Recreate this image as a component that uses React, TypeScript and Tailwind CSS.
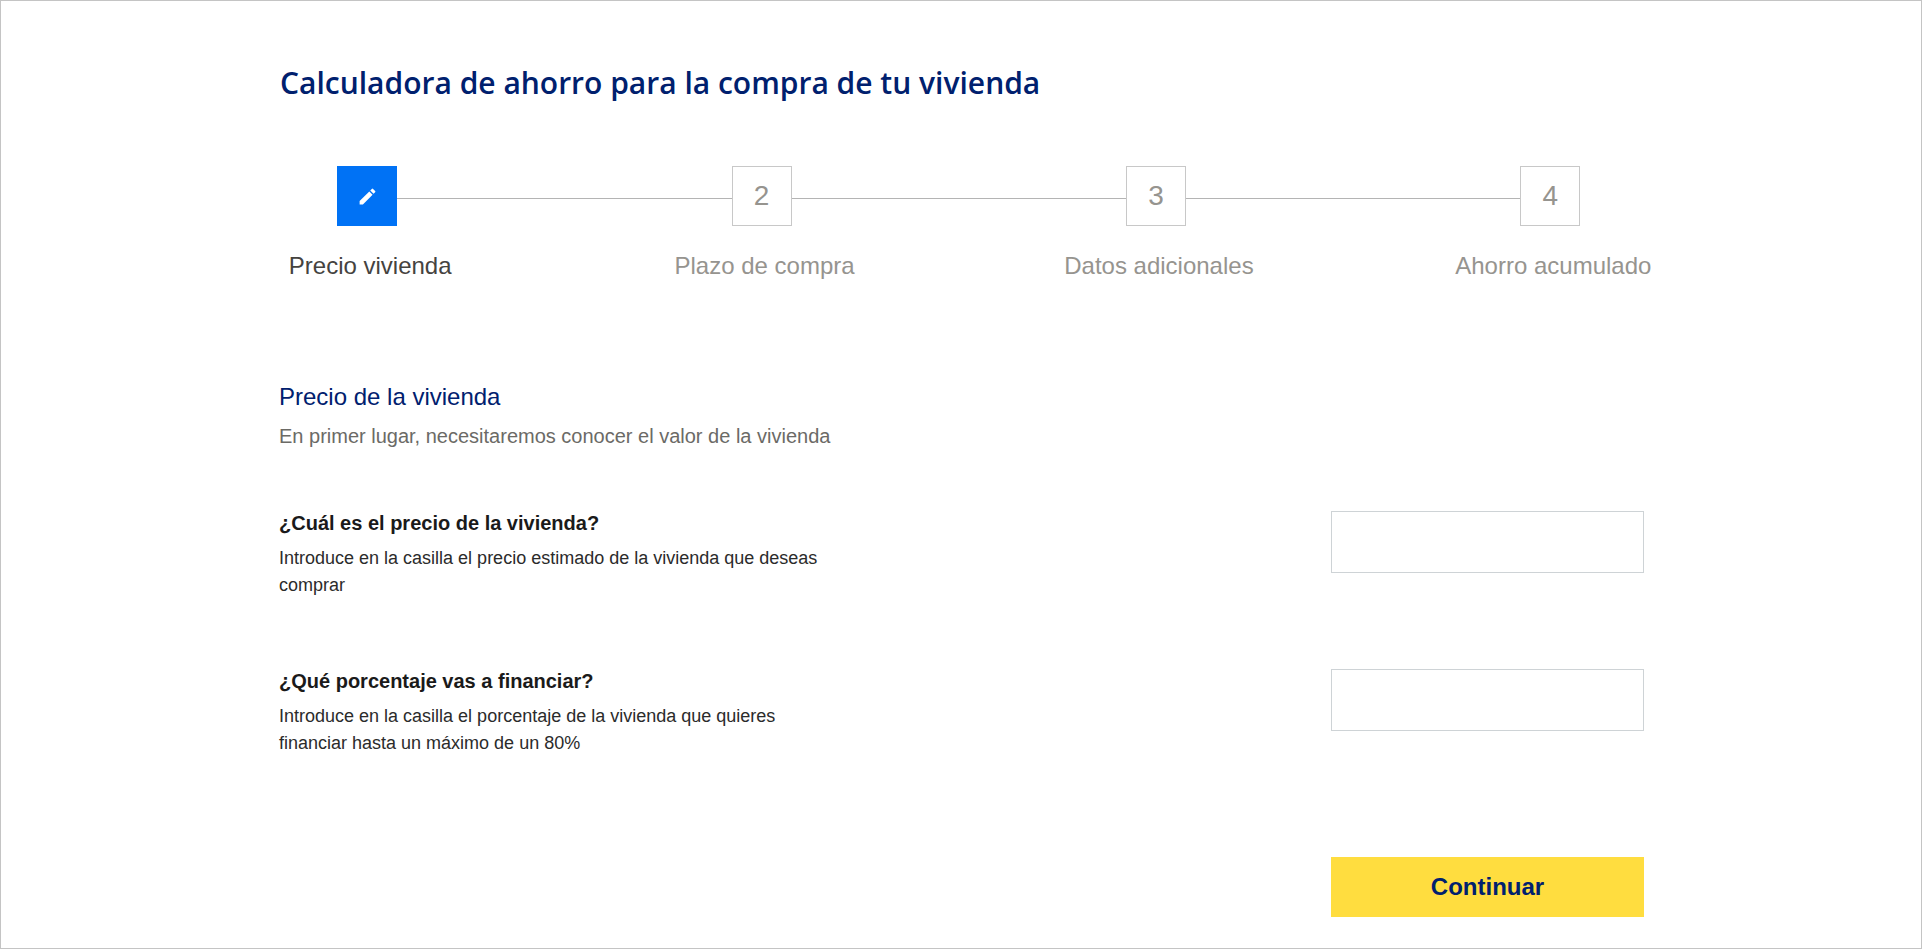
const sans = "font-['Liberation_Sans',Arial,sans-serif]";

function Step({ n, label, active, first, last }: { n?: string; label: string; active?: boolean; first?: boolean; last?: boolean }) {
  return (
    <div className="flex flex-col items-center">
      <div className="flex w-full items-start">
        <div className={`mt-[32px] h-px flex-1 ${first ? "" : "bg-[#b4b4b4]"}`} />
        {active ? (
          <div className="flex h-[60px] w-[60px] items-center justify-center bg-[#0072f5]">
            <svg width="21" height="21" viewBox="0 0 24 24" fill="#ffffff">
              <path d="M3 17.25V21h3.75L17.81 9.94l-3.75-3.75L3 17.25zM20.71 7.04a1 1 0 0 0 0-1.41l-2.34-2.34a1 1 0 0 0-1.41 0l-1.83 1.83 3.75 3.75 1.83-1.83z" />
            </svg>
          </div>
        ) : (
          <div className="flex h-[60px] w-[60px] items-center justify-center border border-[#c8c8c8] text-[28px] text-[#96948f]">
            {n}
          </div>
        )}
        <div className={`mt-[32px] h-px flex-1 ${last ? "" : "bg-[#b4b4b4]"}`} />
      </div>
      <div className={`mt-[27px] ml-[6px] text-[24px] leading-[26px] ${active ? "text-[#45433f]" : "text-[#96948f]"}`}>{label}</div>
    </div>
  );
}

function Question({ title, lines }: { title: string; lines: string[] }) {
  return (
    <div className="flex justify-between">
      <div>
        <div className="text-[20px] leading-[24px] font-bold text-[#1a1a1a]">{title}</div>
        <div className="mt-[10px] text-[18px] leading-[27px] text-[#2b2b2b]">
          {lines.map((l) => (
            <div key={l}>{l}</div>
          ))}
        </div>
      </div>
      <input className="h-[62px] w-[313px] border border-[#ced3d6] bg-white outline-none" />
    </div>
  );
}

export default function App() {
  return (
    <div className={`h-[949px] overflow-hidden border border-[#c4c4c4] bg-white ${sans}`}>
      <div className="pl-[279px] pt-[64px]">
        <h1 className="font-['Open_Sans',sans-serif] text-[30px] leading-[36px] font-semibold text-[#00206e]">
          Calculadora de ahorro para la compra de tu vivienda
        </h1>
      </div>
      <div className="ml-[169px] mt-[65px] grid w-[1577.5px] grid-cols-4">
        <Step label="Precio vivienda" active first />
        <Step n="2" label="Plazo de compra" />
        <Step n="3" label="Datos adicionales" />
        <Step n="4" label="Ahorro acumulado" last />
      </div>
      <div className="ml-[278px] mt-[105px] w-[1365px]">
        <h2 className="text-[24px] leading-[26px] text-[#00206e]">Precio de la vivienda</h2>
        <p className="mt-[13px] text-[20px] leading-[26px] text-[#6b6a66]">
          En primer lugar, necesitaremos conocer el valor de la vivienda
        </p>
        <div className="mt-[62px] flex flex-col gap-[70px]">
          <Question
            title="¿Cuál es el precio de la vivienda?"
            lines={["Introduce en la casilla el precio estimado de la vivienda que deseas", "comprar"]}
          />
          <Question
            title="¿Qué porcentaje vas a financiar?"
            lines={["Introduce en la casilla el porcentaje de la vivienda que quieres", "financiar hasta un máximo de un 80%"]}
          />
        </div>
        <div className="mt-[100px] flex justify-end">
          <button className="h-[60px] w-[313px] bg-[#ffdd3f] text-[24px] font-bold text-[#00206e]">Continuar</button>
        </div>
      </div>
    </div>
  );
}
